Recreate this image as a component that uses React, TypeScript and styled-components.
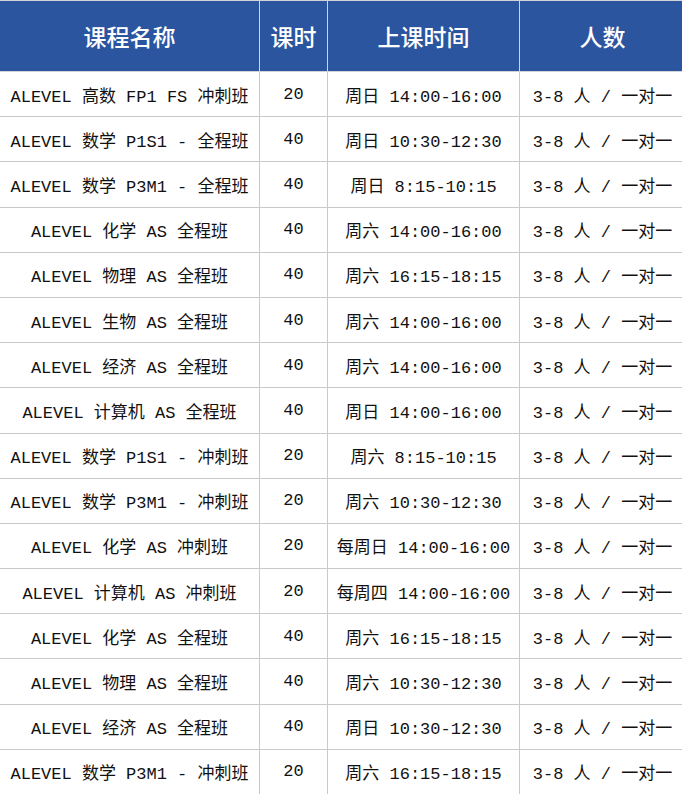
import styled, { createGlobalStyle } from 'styled-components'

type Course = {
  name: string
  hours: number
  time: string
  size: string
}

const GlobalStyle = createGlobalStyle`
  html, body {
    margin: 0;
    padding: 0;
    background: #ffffff;
  }
`

const Table = styled.table`
  width: 682px;
  border-collapse: collapse;
  table-layout: fixed;
  font-family: 'Liberation Mono', 'Noto Sans CJK SC', monospace;
  color: #111111;
`

const HeadCell = styled.th<{ $width: number }>`
  width: ${(p) => p.$width}px;
  height: 70px;
  padding: 0;
  background-color: #2c55a0;
  color: #ffffff;
  font-family: 'Noto Sans CJK SC', sans-serif;
  font-size: 23px;
  font-weight: 500;
  text-align: center;
  border: 1px solid #d2d4d8;
  border-left: none;
  &:last-child {
    border-right: none;
  }
`

const Row = styled.tr`
  height: 45.2px;
`

const Cell = styled.td`
  padding: 0;
  font-size: 17px;
  text-align: center;
  white-space: pre;
  border: 1px solid #c9c9c9;
  border-left: none;
  &:last-child {
    border-right: none;
  }
`

const courses: Course[] = [
  { name: 'ALEVEL 高数 FP1 FS 冲刺班', hours: 20, time: '周日 14:00-16:00', size: '3-8 人 / 一对一' },
  { name: 'ALEVEL 数学 P1S1 - 全程班', hours: 40, time: '周日 10:30-12:30', size: '3-8 人 / 一对一' },
  { name: 'ALEVEL 数学 P3M1 - 全程班', hours: 40, time: '周日 8:15-10:15', size: '3-8 人 / 一对一' },
  { name: 'ALEVEL 化学 AS 全程班', hours: 40, time: '周六 14:00-16:00', size: '3-8 人 / 一对一' },
  { name: 'ALEVEL 物理 AS 全程班', hours: 40, time: '周六 16:15-18:15', size: '3-8 人 / 一对一' },
  { name: 'ALEVEL 生物 AS 全程班', hours: 40, time: '周六 14:00-16:00', size: '3-8 人 / 一对一' },
  { name: 'ALEVEL 经济 AS 全程班', hours: 40, time: '周六 14:00-16:00', size: '3-8 人 / 一对一' },
  { name: 'ALEVEL 计算机 AS 全程班', hours: 40, time: '周日 14:00-16:00', size: '3-8 人 / 一对一' },
  { name: 'ALEVEL 数学 P1S1 - 冲刺班', hours: 20, time: '周六 8:15-10:15', size: '3-8 人 / 一对一' },
  { name: 'ALEVEL 数学 P3M1 - 冲刺班', hours: 20, time: '周六 10:30-12:30', size: '3-8 人 / 一对一' },
  { name: 'ALEVEL 化学 AS 冲刺班', hours: 20, time: '每周日 14:00-16:00', size: '3-8 人 / 一对一' },
  { name: 'ALEVEL 计算机 AS 冲刺班', hours: 20, time: '每周四 14:00-16:00', size: '3-8 人 / 一对一' },
  { name: 'ALEVEL 化学 AS 全程班', hours: 40, time: '周六 16:15-18:15', size: '3-8 人 / 一对一' },
  { name: 'ALEVEL 物理 AS 全程班', hours: 40, time: '周六 10:30-12:30', size: '3-8 人 / 一对一' },
  { name: 'ALEVEL 经济 AS 全程班', hours: 40, time: '周日 10:30-12:30', size: '3-8 人 / 一对一' },
  { name: 'ALEVEL 数学 P3M1 - 冲刺班', hours: 20, time: '周六 16:15-18:15', size: '3-8 人 / 一对一' },
]

function App() {
  return (
    <>
      <GlobalStyle />
      <Table>
        <thead>
          <tr>
            <HeadCell $width={259}>课程名称</HeadCell>
            <HeadCell $width={67}>课时</HeadCell>
            <HeadCell $width={191}>上课时间</HeadCell>
            <HeadCell $width={165}>人数</HeadCell>
          </tr>
        </thead>
        <tbody>
          {courses.map((c, i) => (
            <Row key={i}>
              <Cell>{c.name}</Cell>
              <Cell>{c.hours}</Cell>
              <Cell>{c.time}</Cell>
              <Cell>{c.size}</Cell>
            </Row>
          ))}
        </tbody>
      </Table>
    </>
  )
}

export default App
